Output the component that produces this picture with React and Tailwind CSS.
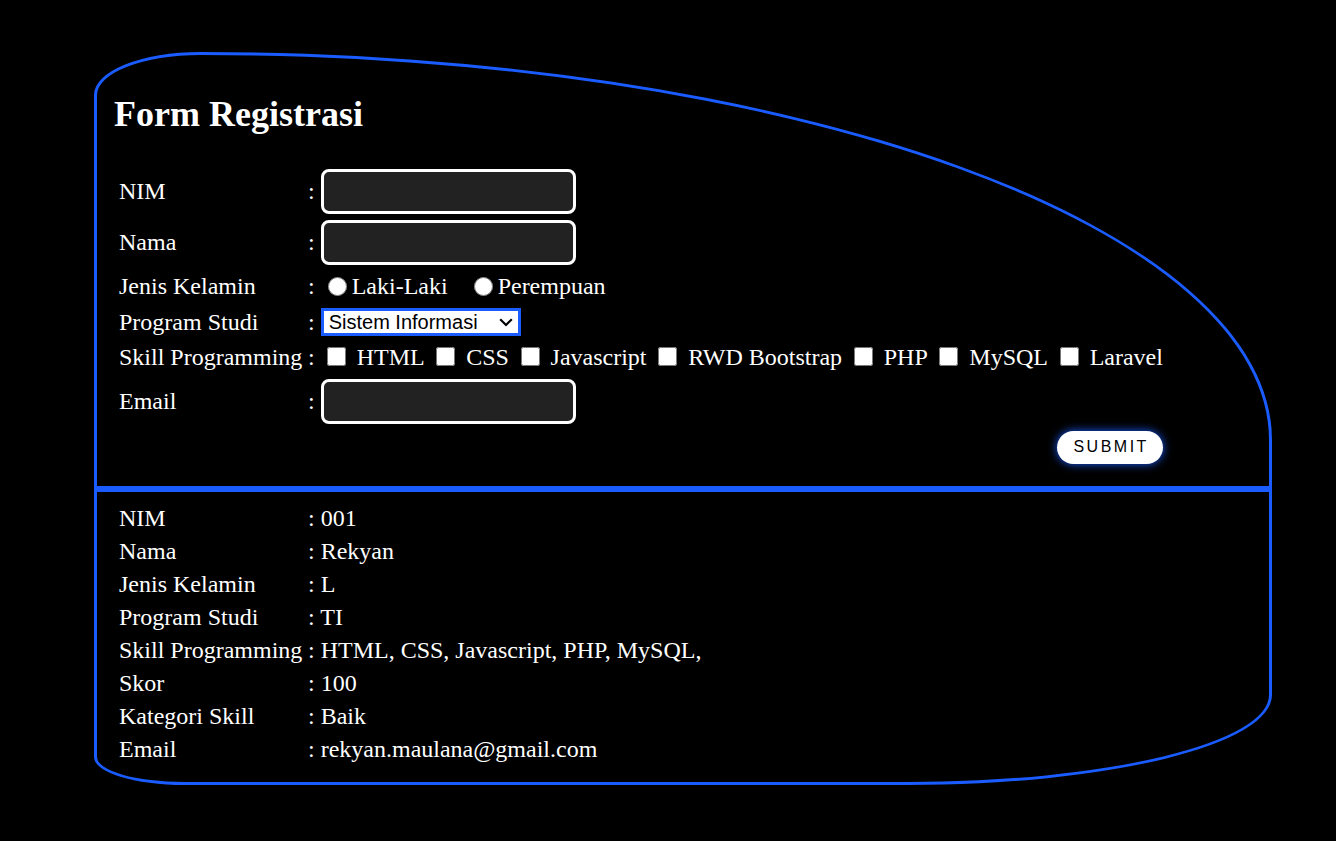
import React from "react";

const serif = { fontFamily: '"Liberation Serif", "Times New Roman", serif' };

function Colon() {
  return <span className="leading-[27px]">:</span>;
}

function Row({ label, h, children, end }) {
  return (
    <div className={`flex items-center ${h}`}>
      <div className="w-[189px] shrink-0 leading-[27px]">{label}</div>
      <div className={`flex items-center flex-1 ${end ? "justify-end" : ""}`}>{children}</div>
    </div>
  );
}

function TextBox() {
  return (
    <input
      type="text"
      className="ml-[6px] w-[255px] h-[45px] bg-[#222222] border-[3px] border-white rounded-[8px] outline-none"
    />
  );
}

const skills = ["HTML", "CSS", "Javascript", "RWD Bootstrap", "PHP", "MySQL", "Laravel"];

const results = [
  ["NIM", "001"],
  ["Nama", "Rekyan"],
  ["Jenis Kelamin", "L"],
  ["Program Studi", "TI"],
  ["Skill Programming", "HTML, CSS, Javascript, PHP, MySQL,"],
  ["Skor", "100"],
  ["Kategori Skill", "Baik"],
  ["Email", "rekyan.maulana@gmail.com"],
];

export default function App() {
  return (
    <div className="w-full min-h-[841px] bg-black text-white overflow-hidden pt-[52px]" style={serif}>
      <div className="ml-[94px] w-[1178px] border-[3px] border-[#1a5cff] rounded-[106px_1071px_364px_90px/43px_388px_90px_28px] text-[24px]">
        <div className="pl-[17px] pt-[39px]">
          <h2 className="text-[36px] font-bold leading-[40px]">Form Registrasi</h2>
          <form className="mt-[35px] pl-[5px] w-fit flex flex-col gap-[6px]" onSubmit={(e) => e.preventDefault()}>
            <Row label="NIM" h="h-[45px]">
              <Colon />
              <TextBox />
            </Row>
            <Row label="Nama" h="h-[45px]">
              <Colon />
              <TextBox />
            </Row>
            <Row label="Jenis Kelamin" h="h-[31px]">
              <Colon />
              <label className="flex items-center leading-[27px]">
                <input type="radio" name="jk" className="ml-[13px] mr-[5px] w-[19px] h-[19px]" />
                Laki-Laki
              </label>
              <label className="flex items-center leading-[27px]">
                <input type="radio" name="jk" className="ml-[26px] mr-[5px] w-[19px] h-[19px]" />
                Perempuan
              </label>
            </Row>
            <Row label="Program Studi" h="h-[28px]">
              <Colon />
              <div className="relative ml-[6px] w-[200px] h-[28px]">
                <select
                  className="block appearance-none w-full h-full bg-white text-black border-[3px] border-[#1a5cff] pl-[5px] text-[20px] leading-[22px] outline-none"
                  style={{ fontFamily: '"Liberation Sans", Arial, sans-serif' }}
                  defaultValue="SI"
                >
                  <option value="SI">Sistem Informasi</option>
                  <option value="TI">Teknik Informatika</option>
                </select>
                <svg
                  className="absolute left-[178px] top-[10px] pointer-events-none"
                  width="14"
                  height="9"
                  viewBox="0 0 14 9"
                  fill="none"
                >
                  <path d="M1.2 1.2 L7 7 L12.8 1.2" stroke="black" strokeWidth="2.2" />
                </svg>
              </div>
            </Row>
            <Row label="Skill Programming" h="h-[31px]">
              <Colon />
              {skills.map((s, i) => (
                <label key={s} className="flex items-center leading-[27px] whitespace-nowrap">
                  <input
                    type="checkbox"
                    className={`${i === 0 ? "ml-[12px]" : "ml-[11.6px]"} mr-[11px] w-[19px] h-[19px] -translate-y-[1px]`}
                  />
                  {s}
                </label>
              ))}
            </Row>
            <Row label="Email" h="h-[45px]">
              <Colon />
              <TextBox />
            </Row>
            <Row label="" h="h-[34px]" end>
              <button
                type="submit"
                className="w-[106px] h-[33px] rounded-full bg-white text-black text-[16px] tracking-[2.5px] pl-[2.5px] flex items-center justify-center shadow-[0_0_10px_#1a5cff]"
                style={{ fontFamily: '"Liberation Sans", Arial, sans-serif' }}
              >
                SUBMIT
              </button>
            </Row>
          </form>
        </div>

        <div className="mt-[22px] h-[6px] bg-[#1a5cff]"></div>

        <div className="pl-[22px] pt-[10px] pb-[16px]">
          {results.map(([k, v]) => (
            <div key={k} className="flex h-[33px] leading-[33px]">
              <div className="w-[189px] shrink-0">{k}</div>
              <div>: {v}</div>
            </div>
          ))}
        </div>
      </div>
    </div>
  );
}
